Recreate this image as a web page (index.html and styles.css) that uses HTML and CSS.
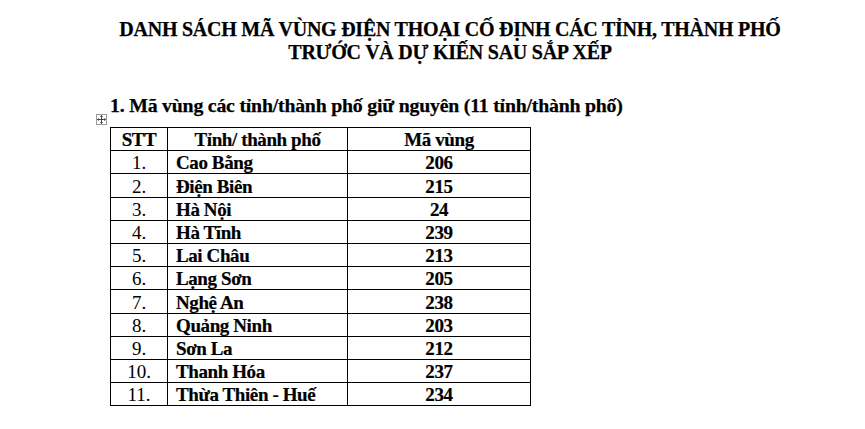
FILE: index.html
```html
<!DOCTYPE html>
<html lang="vi">
<head>
<meta charset="utf-8">
<title>Danh sách mã vùng</title>
<link rel="stylesheet" href="styles.css">
</head>
<body>
<div class="page">
  <h1 class="title">DANH SÁCH MÃ VÙNG ĐIỆN THOẠI CỐ ĐỊNH CÁC TỈNH, THÀNH PHỐ<br>TRƯỚC VÀ DỰ KIẾN SAU SẮP XẾP</h1>
  <h2 class="section">1. Mã vùng các tỉnh/thành phố giữ nguyên (11 tỉnh/thành phố)</h2>
  <div class="table-wrap">
    <span class="move-handle"><svg width="9" height="9" viewBox="0 0 9 9"><path d="M4.5 0.5v8M0.5 4.5h8M3.3 1.7l1.2-1.2 1.2 1.2M3.3 7.3l1.2 1.2 1.2-1.2M1.7 3.3l-1.2 1.2 1.2 1.2M7.3 3.3l1.2 1.2-1.2 1.2" fill="none" stroke="#333" stroke-width="0.9"/></svg></span>
    <table class="codes">
      <colgroup><col class="c-stt"><col class="c-name"><col class="c-code"></colgroup>
      <thead>
        <tr><th>STT</th><th>Tỉnh/ thành phố</th><th>Mã vùng</th></tr>
      </thead>
      <tbody>
        <tr><td class="stt">1.</td><td class="name">Cao Bằng</td><td class="code">206</td></tr>
        <tr><td class="stt">2.</td><td class="name">Điện Biên</td><td class="code">215</td></tr>
        <tr><td class="stt">3.</td><td class="name">Hà Nội</td><td class="code">24</td></tr>
        <tr><td class="stt">4.</td><td class="name">Hà Tĩnh</td><td class="code">239</td></tr>
        <tr><td class="stt">5.</td><td class="name">Lai Châu</td><td class="code">213</td></tr>
        <tr><td class="stt">6.</td><td class="name">Lạng Sơn</td><td class="code">205</td></tr>
        <tr><td class="stt">7.</td><td class="name">Nghệ An</td><td class="code">238</td></tr>
        <tr><td class="stt">8.</td><td class="name">Quảng Ninh</td><td class="code">203</td></tr>
        <tr><td class="stt">9.</td><td class="name">Sơn La</td><td class="code">212</td></tr>
        <tr><td class="stt">10.</td><td class="name">Thanh Hóa</td><td class="code">237</td></tr>
        <tr><td class="stt">11.</td><td class="name">Thừa Thiên - Huế</td><td class="code">234</td></tr>
      </tbody>
    </table>
    <span class="resize-handle"></span>
  </div>
</div>
</body>
</html>
```
FILE: styles.css
```css
html, body {
  margin: 0;
  padding: 0;
  background: #ffffff;
}
body {
  font-family: "Liberation Serif", "Times New Roman", serif;
  color: #000;
}
.page {
  margin-left: 110px;
  width: 680px;
  padding-top: 18px;
}
.title {
  margin: 0;
  font-size: 20px;
  line-height: 23px;
  font-weight: bold;
  text-align: center;
  letter-spacing: -0.25px;
  -webkit-text-stroke: 0.25px #000;
}
.section {
  margin: 30px 0 0 0;
  font-size: 19.8px;
  line-height: 22px;
  font-weight: bold;
  letter-spacing: -0.2px;
  -webkit-text-stroke: 0.25px #000;
}
.table-wrap {
  position: relative;
  margin-top: 11px;
  width: 420px;
}
.move-handle {
  position: absolute;
  left: -14px;
  top: -13px;
  width: 9px;
  height: 9px;
  border: 1px solid #9a9a9a;
  background: #fff;
  display: flex;
}
.resize-handle {
  position: absolute;
  right: -6px;
  bottom: -7px;
  width: 5px;
  height: 5px;
  border: 1px solid #9a9a9a;
  background: #fff;
}
.codes {
  border-collapse: collapse;
  width: 420px;
  table-layout: fixed;
  font-size: 19px;
}
.c-stt { width: 57px; }
.c-name { width: 180px; }
.c-code { width: 183px; }
.codes th, .codes td {
  border: 1px solid #000;
  height: 22.2px;
  padding: 0 6px;
  line-height: 20px;
  vertical-align: bottom;
}
.codes th {
  font-weight: bold;
  text-align: center;
  letter-spacing: -0.4px;
  -webkit-text-stroke: 0.2px #000;
}
.codes td.stt {
  text-align: center;
  font-weight: normal;
}
.codes td.name {
  font-weight: bold;
  text-align: left;
  padding-left: 8px;
  letter-spacing: -0.4px;
  -webkit-text-stroke: 0.2px #000;
}
.codes td.code {
  font-weight: bold;
  text-align: center;
  letter-spacing: -0.4px;
  -webkit-text-stroke: 0.2px #000;
}
```
